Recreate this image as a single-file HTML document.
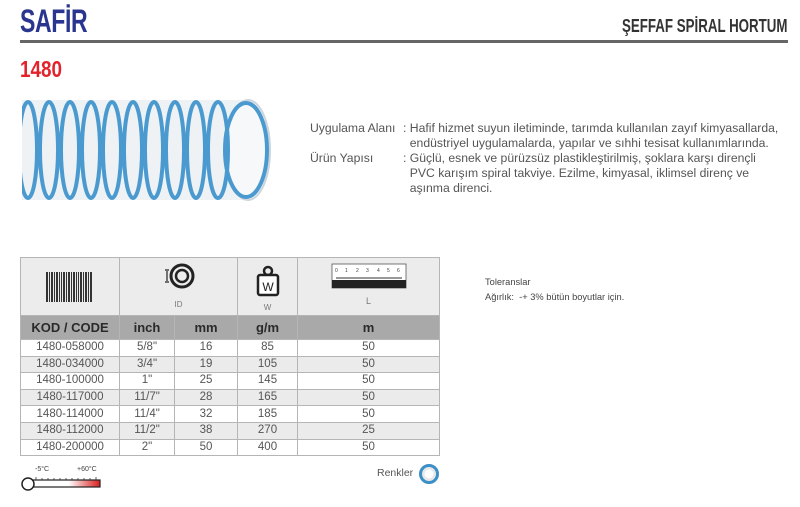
<!DOCTYPE html>
<html><head><meta charset="utf-8"><style>
*{margin:0;padding:0;box-sizing:border-box}
body{width:800px;height:507px;background:#fff;position:relative;overflow:hidden;font-family:"Liberation Sans",sans-serif;color:#555}
.a{position:absolute;white-space:nowrap}
.cond{transform-origin:left top;font-weight:bold}
table{position:absolute;left:20px;top:257px;border-collapse:collapse;font-size:11.5px;color:#555}
td{border:1px solid #b5b5b5;text-align:center;padding:0;height:16.6px;line-height:15px}
tr.h td{background:#ececec;height:56px;vertical-align:top;font-size:8px;color:#777}
tr.d td{background:#a9a9a9;color:#2a2a2a;font-weight:bold;font-size:13px;height:24px}
tr.g td{background:#ebebeb}
</style></head><body>
<div class="a cond" style="left:20px;top:3px;font-size:32px;color:#2a3590;transform:scaleX(0.72);letter-spacing:-0.5px">SAFİR</div>
<div class="a cond" style="left:622px;top:16px;font-size:18px;color:#333;transform:scaleX(0.74)">ŞEFFAF SPİRAL HORTUM</div>
<div style="position:absolute;left:20px;top:40px;width:768px;height:3px;background:#666"></div>
<div class="a cond" style="left:20px;top:56px;font-size:23px;color:#e3232b;transform:scaleX(0.82)">1480</div>

<svg class="a" style="left:20px;top:96px" width="252" height="108" viewBox="0 0 252 108">
<rect x="0" y="4" width="228" height="100" fill="#eef2f5"/>
<ellipse cx="228" cy="54" rx="22" ry="50" fill="#f6f8fa" stroke="#cdd5dc" stroke-width="2"/>
<g fill="none" stroke="#4a9ad0" stroke-width="4">
<ellipse cx="8" cy="54" rx="9" ry="48"/>
<ellipse cx="29" cy="54" rx="9" ry="48"/>
<ellipse cx="50" cy="54" rx="9" ry="48"/>
<ellipse cx="71" cy="54" rx="9" ry="48"/>
<ellipse cx="92" cy="54" rx="9" ry="48"/>
<ellipse cx="113" cy="54" rx="9" ry="48"/>
<ellipse cx="134" cy="54" rx="9" ry="48"/>
<ellipse cx="155" cy="54" rx="9" ry="48"/>
<ellipse cx="176" cy="54" rx="9" ry="48"/>
<ellipse cx="198" cy="54" rx="10" ry="48"/>
<ellipse cx="226" cy="54" rx="21" ry="47"/>
</g>
<rect x="0" y="0" width="2" height="108" fill="#fff"/>
</svg>

<div class="a" style="left:310px;top:121px;font-size:12.2px;line-height:15px;color:#555">Uygulama Alanı<br><br>Ürün Yapısı</div>
<div class="a" style="left:403px;top:121px;font-size:12.2px;line-height:15px;color:#555">: Hafif hizmet suyun iletiminde, tarımda kullanılan zayıf kimyasallarda,<br>&nbsp;&nbsp;endüstriyel uygulamalarda, yapılar ve sıhhi tesisat kullanımlarında.<br>: Güçlü, esnek ve pürüzsüz plastikleştirilmiş, şoklara karşı dirençli<br>&nbsp;&nbsp;PVC karışım spiral takviye. Ezilme, kimyasal, iklimsel direnç ve<br>&nbsp;&nbsp;aşınma direnci.</div>

<table>
<colgroup><col style="width:99px"><col style="width:55px"><col style="width:63px"><col style="width:60px"><col style="width:142px"></colgroup>
<tr class="h">
<td><svg width="60" height="40" style="margin-top:12px"><g fill="#333">
<rect x="6" y="2" width="2" height="30"/><rect x="9" y="2" width="1" height="30"/><rect x="11" y="2" width="2" height="30"/><rect x="14" y="2" width="1" height="30"/><rect x="16" y="2" width="2" height="30"/><rect x="19" y="2" width="1" height="30"/><rect x="21" y="2" width="1" height="30"/><rect x="23" y="2" width="2" height="30"/><rect x="26" y="2" width="1" height="30"/><rect x="28" y="2" width="2" height="30"/><rect x="31" y="2" width="1" height="30"/><rect x="33" y="2" width="2" height="30"/><rect x="36" y="2" width="1" height="30"/><rect x="38" y="2" width="1" height="30"/><rect x="40" y="2" width="2" height="30"/><rect x="43" y="2" width="1" height="30"/><rect x="45" y="2" width="2" height="30"/><rect x="48" y="2" width="1" height="30"/><rect x="50" y="2" width="2" height="30"/></g></svg></td>
<td colspan="2"><svg width="50" height="30" style="margin-top:4px"><circle cx="28" cy="14" r="11" fill="none" stroke="#222" stroke-width="3"/><circle cx="28" cy="14" r="6" fill="none" stroke="#222" stroke-width="2.5"/><path d="M11 8h4M11 20h4M13 9v10" stroke="#222" stroke-width="1.2"/></svg><div>ID</div></td>
<td><svg width="30" height="34" style="margin-top:6px"><circle cx="15" cy="7" r="4" fill="none" stroke="#222" stroke-width="2.5"/><rect x="5" y="11" width="20" height="20" rx="2" fill="#fff" stroke="#222" stroke-width="2.5"/><text x="15" y="27" font-size="12" text-anchor="middle" fill="#222" font-family="Liberation Sans">W</text></svg><div style="margin-top:-3px">W</div></td>
<td><svg width="76" height="26" style="margin-top:5px"><rect x="1" y="1" width="74" height="24" fill="#fff" stroke="#555" stroke-width="0.8"/><rect x="1" y="17" width="74" height="8" fill="#222"/><path d="M5 15h66" stroke="#333"/><g fill="#444" font-size="5" font-family="Liberation Sans"><text x="4" y="9">0</text><text x="14" y="9">1</text><text x="25" y="9">2</text><text x="35" y="9">3</text><text x="46" y="9">4</text><text x="56" y="9">5</text><text x="66" y="9">6</text></g></svg><div style="font-size:9px">L</div></td>
</tr>
<tr class="d"><td>KOD / CODE</td><td>inch</td><td>mm</td><td>g/m</td><td>m</td></tr>
<tr><td>1480-058000</td><td>5/8"</td><td>16</td><td>85</td><td>50</td></tr>
<tr class="g"><td>1480-034000</td><td>3/4"</td><td>19</td><td>105</td><td>50</td></tr>
<tr><td>1480-100000</td><td>1"</td><td>25</td><td>145</td><td>50</td></tr>
<tr class="g"><td>1480-117000</td><td>11/7"</td><td>28</td><td>165</td><td>50</td></tr>
<tr><td>1480-114000</td><td>11/4"</td><td>32</td><td>185</td><td>50</td></tr>
<tr class="g"><td>1480-112000</td><td>11/2"</td><td>38</td><td>270</td><td>25</td></tr>
<tr><td>1480-200000</td><td>2"</td><td>50</td><td>400</td><td>50</td></tr>
</table>

<div class="a" style="left:485px;top:275px;font-size:9.3px;line-height:15px;color:#444">Toleranslar<br>Ağırlık:&nbsp; -+ 3% bütün boyutlar için.</div>

<svg class="a" style="left:20px;top:463px" width="85" height="30">
<text x="15" y="8" font-size="7" fill="#444" font-family="Liberation Sans">-5°C</text>
<text x="57" y="8" font-size="7" fill="#444" font-family="Liberation Sans">+60°C</text>
<defs><linearGradient id="t" x1="0" x2="1"><stop offset="0.55" stop-color="#fff"/><stop offset="1" stop-color="#d81e1e"/></linearGradient></defs>
<rect x="10" y="17" width="70" height="7" fill="url(#t)" stroke="#222" stroke-width="1.2"/>
<circle cx="8" cy="21" r="6" fill="#fff" stroke="#222" stroke-width="1.5"/>
<path d="M16 17v-3M22 17v-2M28 17v-2M34 17v-2M40 17v-2M46 17v-2M52 17v-2M58 17v-2M64 17v-2M70 17v-2M76 17v-3" stroke="#333" stroke-width="0.8"/>
</svg>

<div class="a" style="left:377px;top:467px;font-size:10.5px;color:#555">Renkler</div>
<svg class="a" style="left:418px;top:463px" width="22" height="22"><circle cx="11" cy="11" r="8.5" fill="#e8e8e8" stroke="#3d8fc7" stroke-width="3"/><circle cx="11" cy="11" r="4.5" fill="#fff"/></svg>
</body></html>
